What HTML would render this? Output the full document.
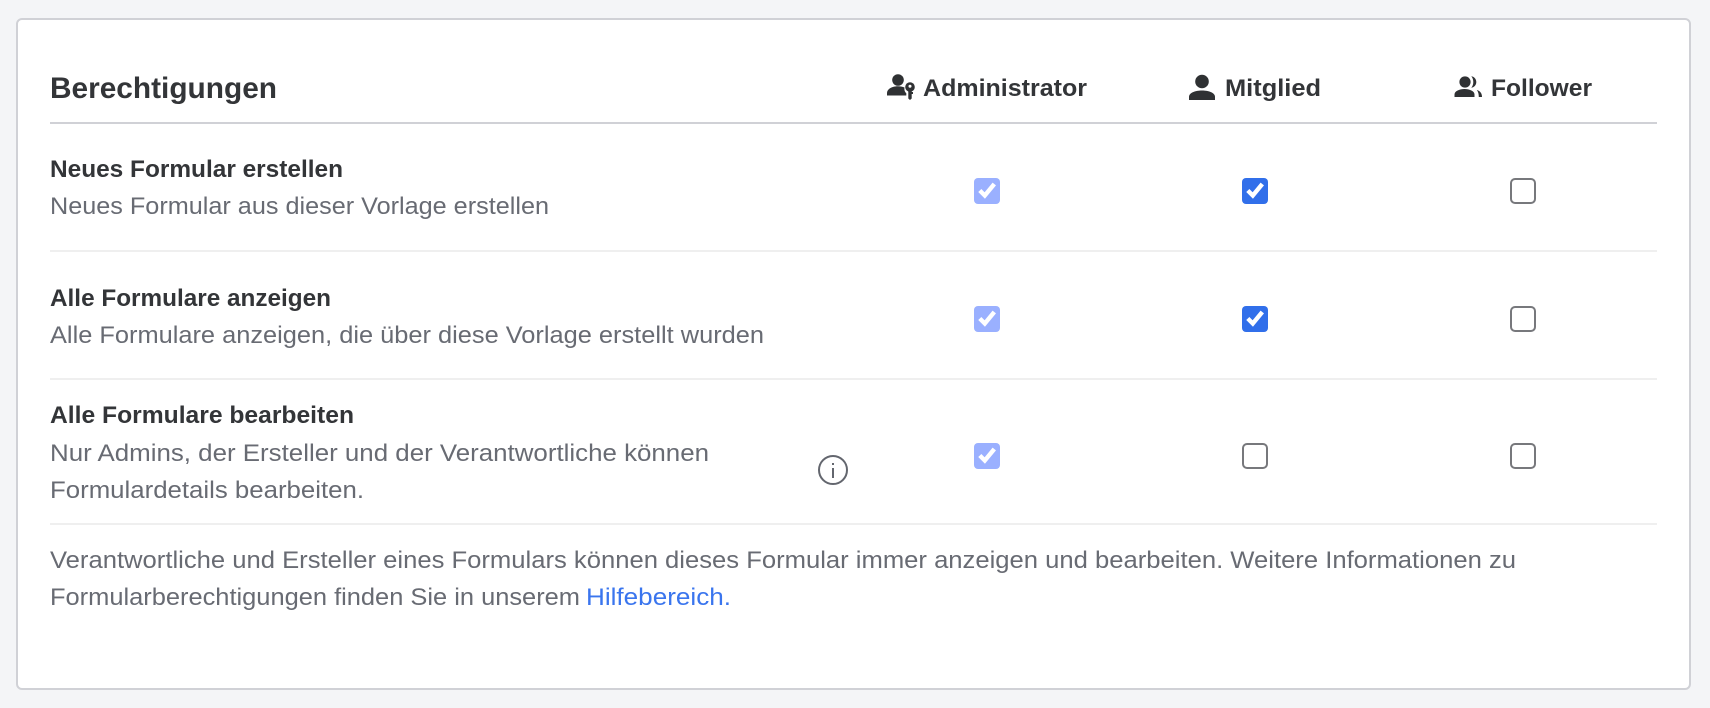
<!DOCTYPE html>
<html lang="de">
<head>
<meta charset="utf-8">
<title>Berechtigungen</title>
<style>
html,body{margin:0;padding:0;background:#f4f5f7;width:1710px;height:708px;overflow:hidden}
svg{display:block}
text{font-family:"Liberation Sans",sans-serif;white-space:pre}
.h{font-weight:700;fill:#333538;font-size:24px}
.s{fill:#686b73;font-size:24px}
.c{fill:#333538;font-weight:700;font-size:24px}
</style>
</head>
<body>
<svg width="1710" height="708" viewBox="0 0 1710 708" xmlns="http://www.w3.org/2000/svg">
<defs>
<g id="on"><rect width="26" height="26" rx="4"/><path d="M5.800 12.500l5 5L20.300 6" fill="none" stroke="#fff" stroke-width="4.400"/></g>
<g id="off"><rect x="1" y="1" width="24" height="24" rx="4" fill="#fff" stroke="#77787c" stroke-width="2"/></g>
</defs>
<rect x="17" y="19" width="1673" height="670" rx="5" fill="#fff" stroke="#d0d1d6" stroke-width="2"/>

<text x="50" y="98" font-size="30" font-weight="700" fill="#333538" textLength="227" lengthAdjust="spacingAndGlyphs">Berechtigungen</text>

<!-- admin icon -->
<g fill="#2f3133">
<circle cx="898" cy="80" r="5.800"/>
<path d="M887 95.500v-2.500c0-4 5-6.800 11-6.800 2.600 0 4.800.5 6.500 1.300-.4 2.600.3 4.500 1.800 5.700v2.300z"/>
<circle cx="910" cy="87" r="4.800"/>
<path d="M908.300 90h3.400v2h1.300v2h-1.300v4.500l-1.700 1.500-1.700-1.500z"/>
</g>
<circle cx="910" cy="86.300" r="1.500" fill="#fff"/>
<text class="c" x="923" y="96" textLength="164" lengthAdjust="spacingAndGlyphs">Administrator</text>

<!-- member icon -->
<g fill="#2f3133">
<circle cx="1202" cy="81.500" r="6.800"/>
<path d="M1189 100v-3c0-4.500 6.500-6.500 13-6.500s13 2 13 6.500v3z"/>
</g>
<text class="c" x="1225" y="96" textLength="96" lengthAdjust="spacingAndGlyphs">Mitglied</text>

<!-- follower icon -->
<g fill="#2f3133">
<circle cx="1465" cy="82" r="5.600"/>
<path d="M1454.500 97v-2.500c0-3.500 5-5.500 10-5.500s10 2 10 5.500V97z"/>
<path d="M1471.300 76.200c3 .4 5 2.900 5 5.800s-2 5.400-5 5.800c1.300-1.600 2-3.600 2-5.800s-.7-4.200-2-5.800z"/>
<path d="M1476.800 90c3.400 1 5.200 3.300 5.200 7h-3.200c0-3-.6-5.200-2-7z"/>
</g>
<text class="c" x="1491" y="96" textLength="101" lengthAdjust="spacingAndGlyphs">Follower</text>

<rect x="50" y="122" width="1607" height="2" fill="#d0d1d6"/>

<!-- row 1 -->
<text class="h" x="50" y="177" textLength="293" lengthAdjust="spacingAndGlyphs">Neues Formular erstellen</text>
<text class="s" x="50" y="214" textLength="499" lengthAdjust="spacingAndGlyphs">Neues Formular aus dieser Vorlage erstellen</text>
<use href="#on" x="974" y="178" fill="#9ab0ff"/>
<use href="#on" x="1242" y="178" fill="#316fea"/>
<use href="#off" x="1510" y="178"/>
<rect x="50" y="250" width="1607" height="2" fill="#efefef"/>

<!-- row 2 -->
<text class="h" x="50" y="306" textLength="281" lengthAdjust="spacingAndGlyphs">Alle Formulare anzeigen</text>
<text class="s" x="50" y="343" textLength="714" lengthAdjust="spacingAndGlyphs">Alle Formulare anzeigen, die über diese Vorlage erstellt wurden</text>
<use href="#on" x="974" y="306" fill="#9ab0ff"/>
<use href="#on" x="1242" y="306" fill="#316fea"/>
<use href="#off" x="1510" y="306"/>
<rect x="50" y="378" width="1607" height="2" fill="#efefef"/>

<!-- row 3 -->
<text class="h" x="50" y="423" textLength="304" lengthAdjust="spacingAndGlyphs">Alle Formulare bearbeiten</text>
<text class="s" x="50" y="461" textLength="659" lengthAdjust="spacingAndGlyphs">Nur Admins, der Ersteller und der Verantwortliche können</text>
<text class="s" x="50" y="498" textLength="314" lengthAdjust="spacingAndGlyphs">Formulardetails bearbeiten.</text>
<circle cx="833" cy="470" r="14" fill="none" stroke="#63666e" stroke-width="2"/>
<rect x="832" y="468" width="2" height="10" fill="#63666e"/>
<rect x="832" y="463" width="2" height="2" fill="#63666e"/>
<use href="#on" x="974" y="443" fill="#9ab0ff"/>
<use href="#off" x="1242" y="443"/>
<use href="#off" x="1510" y="443"/>
<rect x="50" y="523" width="1607" height="2" fill="#efefef"/>

<!-- footer -->
<text class="s" x="50" y="568" textLength="1466" lengthAdjust="spacingAndGlyphs">Verantwortliche und Ersteller eines Formulars können dieses Formular immer anzeigen und bearbeiten. Weitere Informationen zu</text>
<text class="s" x="50" y="605" textLength="530" lengthAdjust="spacingAndGlyphs">Formularberechtigungen finden Sie in unserem</text>
<text x="586" y="605" font-size="24" fill="#3a75ee" textLength="145" lengthAdjust="spacingAndGlyphs">Hilfebereich.</text>
</svg>
</body>
</html>
